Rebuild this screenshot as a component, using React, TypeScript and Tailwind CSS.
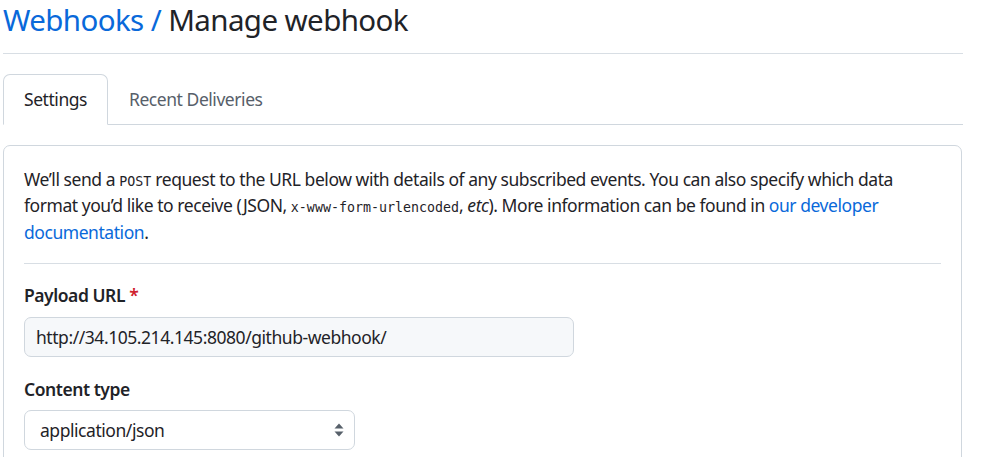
import React from 'react';

const font = { fontFamily: '"Noto Sans", "Open Sans", sans-serif' };
const mono = { fontFamily: '"DejaVu Sans Mono", "Liberation Mono", monospace' };

const SelectArrows: React.FC = () => (
  <svg width="10" height="14" viewBox="0 0 10 14" className="text-[#57606a]" fill="currentColor">
    <path d="M5 0.5 L9.5 5.5 H0.5 Z" />
    <path d="M5 13.5 L9.5 8.5 H0.5 Z" />
  </svg>
);

const App: React.FC = () => {
  return (
    <div className="bg-white min-h-screen text-[#1f2328]" style={font}>
      <div className="ml-[3px] w-[960px]">
        <div className="pb-[13px] border-b border-[#d8dee4]">
          <h2 className="text-[29.5px] leading-[40px] font-normal tracking-[-0.6px]">
            <a className="text-[#0969da]">Webhooks /</a> Manage webhook
          </h2>
        </div>

        <nav className="mt-[20px] flex border-b border-[#d0d7de] text-[17.5px] leading-[28px] tracking-[-0.45px]">
          <div className="px-[20px] py-[10px] -mb-px bg-white border border-b-white border-[#d0d7de] rounded-t-[7px] text-[#1f2328]">
            Settings
          </div>
          <div className="px-[20px] py-[10px] border border-transparent text-[#57606a]">
            Recent Deliveries
          </div>
        </nav>

        <div className="mt-[20px] w-[959px] border border-[#d0d7de] rounded-[7px] px-[20px] pt-[20px] pb-[80px] text-[17.5px] leading-[26.25px] tracking-[-0.45px]">
          <p className="pb-[18px] border-b border-[#d8dee4]">
            We’ll send a{' '}
            <code className="text-[13.3px] leading-none tracking-normal" style={mono}>POST</code>{' '}
            request to the URL below with details of any subscribed events. You can also specify which data format you’d
            like to receive (JSON,{' '}
            <code className="text-[13.3px] leading-none tracking-normal" style={mono}>x-www-form-urlencoded</code>,{' '}
            <em>etc</em>). More information can be found in{' '}
            <a className="text-[#0969da]">our developer documentation</a>.
          </p>

          <div className="mt-[18px]">
            <label className="block font-semibold">
              Payload URL <span className="text-[#cf222e]">*</span>
            </label>
            <div className="mt-[9px] w-[550px] h-[40px] flex items-center px-[11px] bg-[#f6f8fa] border border-[#d0d7de] rounded-[7px]">
              http://34.105.214.145:8080/github-webhook/
            </div>
          </div>

          <div className="mt-[19px]">
            <label className="block font-semibold">Content type</label>
            <div className="mt-[8px] w-[331px] h-[40px] flex items-center justify-between pl-[15px] pr-[10px] bg-white border border-[#d0d7de] rounded-[7px]">
              <span>application/json</span>
              <SelectArrows />
            </div>
          </div>
        </div>
      </div>
    </div>
  );
};

export default App;
